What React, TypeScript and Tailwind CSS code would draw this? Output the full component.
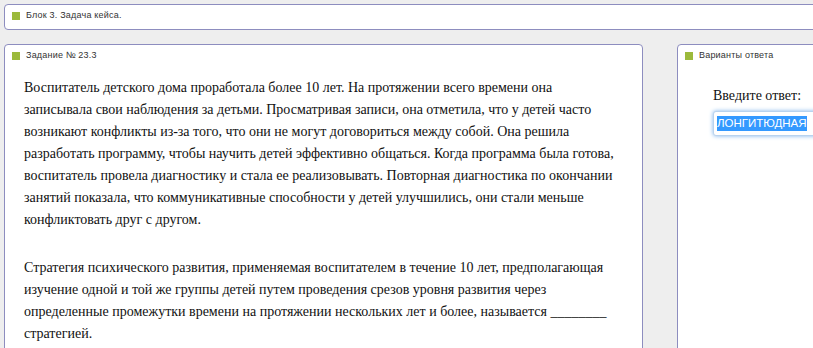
import React from 'react'

const Label = ({ text }: { text: string }) => (
  <div className="flex items-center gap-[6px] h-[20px] pl-[7px] pt-[2px]">
    <span className="w-[8px] h-[8px] bg-[#9cba3c]" />
    <span className="text-[9px] tracking-[0.2px] text-[#333] font-['Liberation_Sans',sans-serif]">{text}</span>
  </div>
)

const panel = 'bg-white border border-[#8d8dbf] rounded-[4px] shrink-0'

const caseLines = [
  'Воспитатель детского дома проработала более 10 лет. На протяжении всего времени она',
  'записывала свои наблюдения за детьми. Просматривая записи, она отметила, что у детей часто',
  'возникают конфликты из-за того, что они не могут договориться между собой. Она решила',
  'разработать программу, чтобы научить детей эффективно общаться. Когда программа была готова,',
  'воспитатель провела диагностику и стала ее реализовывать. Повторная диагностика по окончании',
  'занятий показала, что коммуникативные способности у детей улучшились, они стали меньше',
  'конфликтовать друг с другом.',
]

const questionLines = [
  'Стратегия психического развития, применяемая воспитателем в течение 10 лет, предполагающая',
  'изучение одной и той же группы детей путем проведения срезов уровня развития через',
  'определенные промежутки времени на протяжении нескольких лет и более, называется ________',
  'стратегией.',
]

export default function App() {
  return (
    <div className="w-[813px] h-[348px] overflow-hidden bg-[#eeeeee] pt-[4px] pl-[4px]">
      <div className={`${panel} h-[26px] w-[830px]`}>
        <Label text="Блок 3. Задача кейса." />
      </div>

      <div className="flex mt-[14px] items-start w-[900px]">
        <div className={`${panel} w-[639px] h-[320px] rounded-b-none`}>
          <Label text="Задание № 23.3" />
          <div className="pl-[19px] pt-[12px] text-[14px] leading-[22px] text-[#111] font-['Liberation_Serif',serif] whitespace-nowrap">
            <div>
              {caseLines.map((l, i) => (
                <div key={i}>{l}</div>
              ))}
            </div>
            <div className="mt-[26px]">
              {questionLines.map((l, i) => (
                <div key={i}>{l}</div>
              ))}
            </div>
          </div>
        </div>

        <div className={`${panel} ml-[34px] w-[180px] h-[320px] rounded-b-none`}>
          <Label text="Варианты ответа" />
          <div className="pl-[35px] pt-[22px]">
            <div className="text-[14px] text-[#111] font-['Liberation_Serif',serif] leading-[18px]">Введите ответ:</div>
            <div className="mt-[6px] h-[25px] w-[140px] rounded-[3px] border border-[#b9d3ee] shadow-[0_0_4px_#7fb4ec] bg-white flex items-center pl-[3px]">
              <span className="bg-[#3399ff] text-white text-[11.5px] leading-[15px] font-['Liberation_Sans',sans-serif]">
                ЛОНГИТЮДНАЯ
              </span>
            </div>
          </div>
        </div>
      </div>
    </div>
  )
}
